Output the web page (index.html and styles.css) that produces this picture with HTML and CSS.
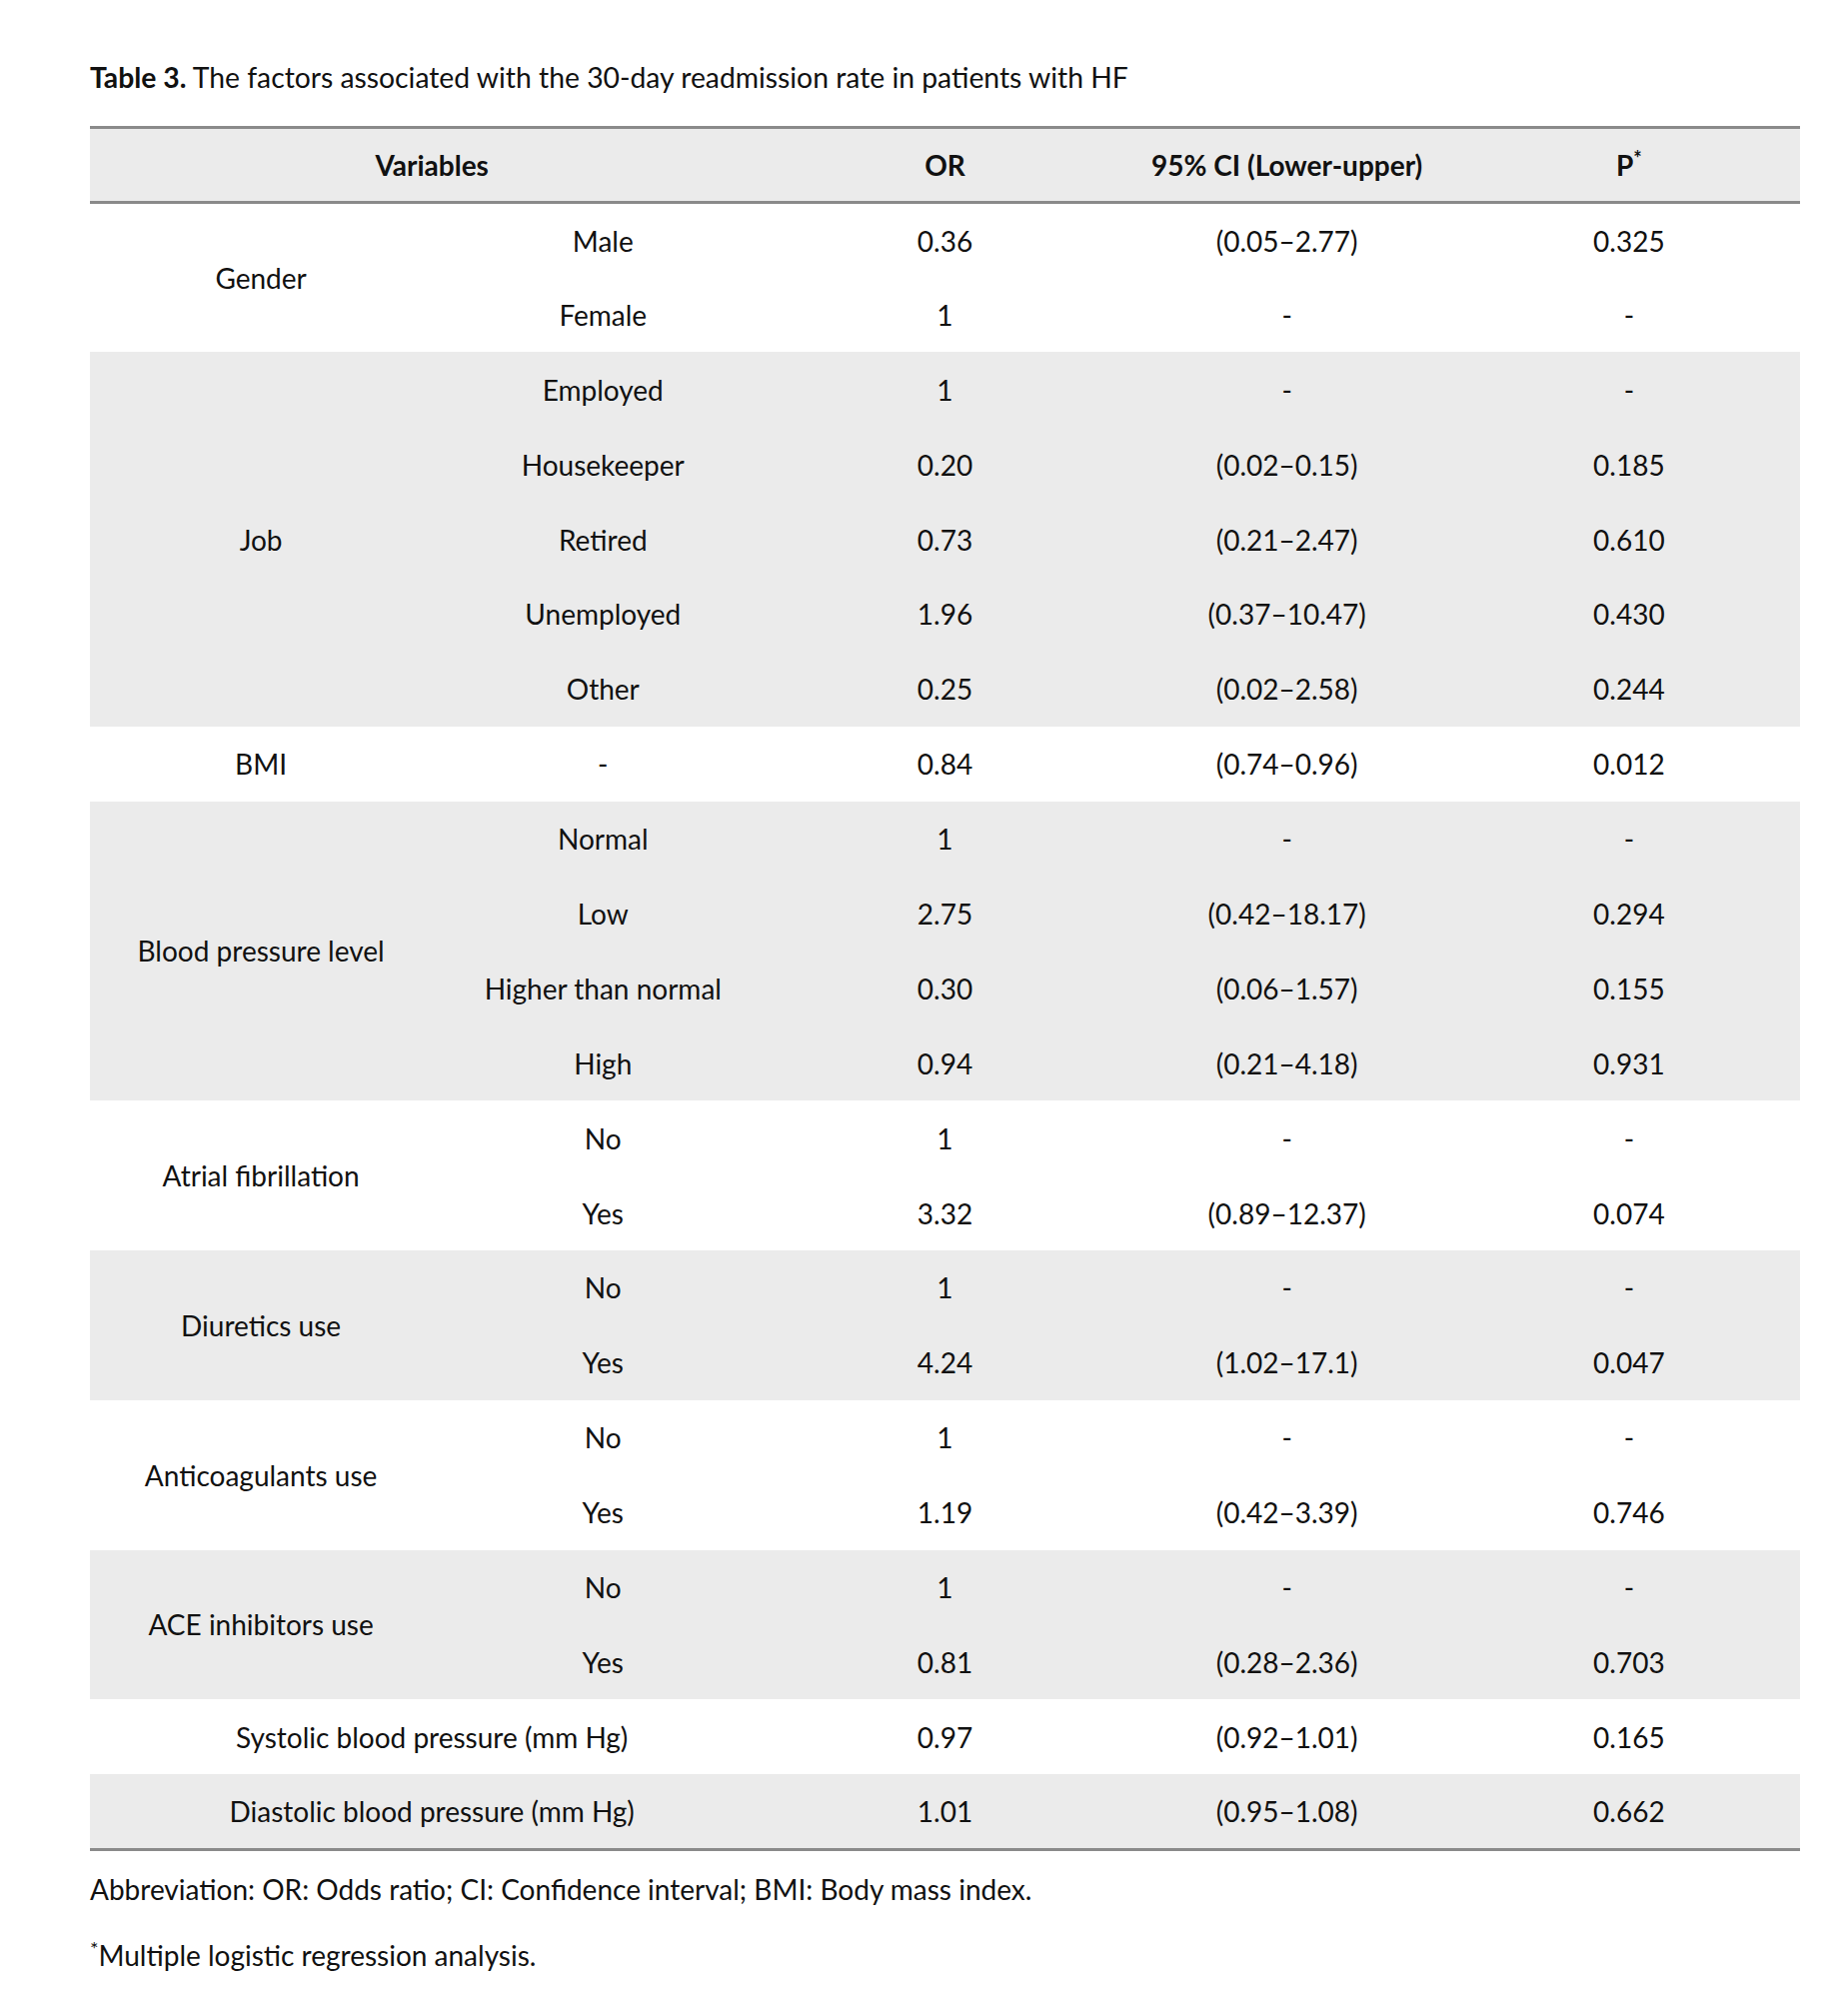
FILE: index.html
```html
<!DOCTYPE html>
<html>
<head>
<meta charset="utf-8">
<link rel="stylesheet" href="styles.css">
</head>
<body>
<div class="page">
  <p class="caption"><b>Table 3.</b> The factors associated with the 30-day readmission rate in patients with HF</p>
  <table class="data">
    <colgroup><col><col><col><col><col></colgroup>
    <thead>
      <tr><th colspan="2">Variables</th><th>OR</th><th>95% CI (Lower-upper)</th><th>P<sup>*</sup></th></tr>
    </thead>
    <tbody class="w">
      <tr><td rowspan="2">Gender</td><td>Male</td><td>0.36</td><td>(0.05–2.77)</td><td>0.325</td></tr>
      <tr><td>Female</td><td>1</td><td>-</td><td>-</td></tr>
    </tbody>
    <tbody class="g">
      <tr><td rowspan="5">Job</td><td>Employed</td><td>1</td><td>-</td><td>-</td></tr>
      <tr><td>Housekeeper</td><td>0.20</td><td>(0.02–0.15)</td><td>0.185</td></tr>
      <tr><td>Retired</td><td>0.73</td><td>(0.21–2.47)</td><td>0.610</td></tr>
      <tr><td>Unemployed</td><td>1.96</td><td>(0.37–10.47)</td><td>0.430</td></tr>
      <tr><td>Other</td><td>0.25</td><td>(0.02–2.58)</td><td>0.244</td></tr>
    </tbody>
    <tbody class="w">
      <tr><td>BMI</td><td>-</td><td>0.84</td><td>(0.74–0.96)</td><td>0.012</td></tr>
    </tbody>
    <tbody class="g">
      <tr><td rowspan="4">Blood pressure level</td><td>Normal</td><td>1</td><td>-</td><td>-</td></tr>
      <tr><td>Low</td><td>2.75</td><td>(0.42–18.17)</td><td>0.294</td></tr>
      <tr><td>Higher than normal</td><td>0.30</td><td>(0.06–1.57)</td><td>0.155</td></tr>
      <tr><td>High</td><td>0.94</td><td>(0.21–4.18)</td><td>0.931</td></tr>
    </tbody>
    <tbody class="w">
      <tr><td rowspan="2">Atrial fibrillation</td><td>No</td><td>1</td><td>-</td><td>-</td></tr>
      <tr><td>Yes</td><td>3.32</td><td>(0.89–12.37)</td><td>0.074</td></tr>
    </tbody>
    <tbody class="g">
      <tr><td rowspan="2">Diuretics use</td><td>No</td><td>1</td><td>-</td><td>-</td></tr>
      <tr><td>Yes</td><td>4.24</td><td>(1.02–17.1)</td><td>0.047</td></tr>
    </tbody>
    <tbody class="w">
      <tr><td rowspan="2">Anticoagulants use</td><td>No</td><td>1</td><td>-</td><td>-</td></tr>
      <tr><td>Yes</td><td>1.19</td><td>(0.42–3.39)</td><td>0.746</td></tr>
    </tbody>
    <tbody class="g">
      <tr><td rowspan="2">ACE inhibitors use</td><td>No</td><td>1</td><td>-</td><td>-</td></tr>
      <tr><td>Yes</td><td>0.81</td><td>(0.28–2.36)</td><td>0.703</td></tr>
    </tbody>
    <tbody class="w">
      <tr><td colspan="2">Systolic blood pressure (mm Hg)</td><td>0.97</td><td>(0.92–1.01)</td><td>0.165</td></tr>
    </tbody>
    <tbody class="g last">
      <tr><td colspan="2">Diastolic blood pressure (mm Hg)</td><td>1.01</td><td>(0.95–1.08)</td><td>0.662</td></tr>
    </tbody>
  </table>
  <p class="note">Abbreviation: OR: Odds ratio; CI: Confidence interval; BMI: Body mass index.</p>
  <p class="note"><sup>*</sup>Multiple logistic regression analysis.</p>
</div>
</body>
</html>
```
FILE: styles.css
```css
html, body {
  margin: 0;
  padding: 0;
  background: #fff;
}
.page {
  padding: 58px 48px 0 90px;
  font-family: Lato, "Open Sans", sans-serif;
  font-size: 28px;
  color: #111;
}
.caption {
  margin: 0 0 30px 0;
  line-height: 38px;
  font-size: 28.3px;
}
.caption b {
  font-weight: 700;
}
.data {
  width: 1711px;
  border-collapse: collapse;
  table-layout: fixed;
}
.data th, .data td {
  text-align: center;
  vertical-align: middle;
  padding: 0;
  font-weight: 400;
}
.data thead tr {
  background: #ebebeb;
  height: 75px;
}
.data thead th {
  font-weight: 700;
  border-top: 3px solid #8a8a8a;
  border-bottom: 3px solid #8a8a8a;
}
.data sup, .note sup {
  font-size: 20px;
  line-height: 0;
  vertical-align: 10px;
}
.data tbody tr {
  height: 74.9px;
}
.data tbody.g {
  background: #ebebeb;
}
.data tbody.last tr td {
  border-bottom: 3px solid #8a8a8a;
}
.note {
  margin: 16px 0 0 0;
  line-height: 44px;
}
.note + .note {
  margin-top: 22px;
}
```
